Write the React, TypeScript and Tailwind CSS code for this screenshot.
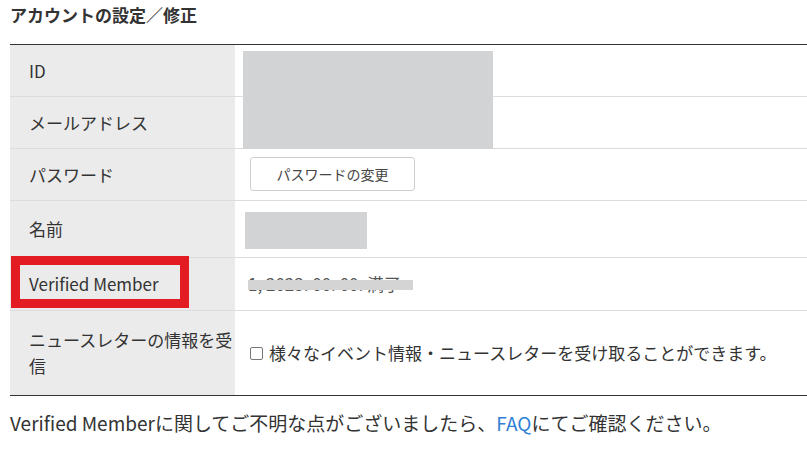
const rows = [
  { label: 'ID', h: 'h-[52px]' },
  { label: 'メールアドレス', h: 'h-[52px]' },
  { label: 'パスワード', h: 'h-[52px]' },
  { label: '名前', h: 'h-[57px]' },
  { label: 'Verified Member', h: 'h-[53px]' },
];

function Cell({ label, h, children }: { label: string; h: string; children?: React.ReactNode }) {
  return (
    <div className={`flex ${h} border-b border-[#dcdcdc]`}>
      <div className="w-[225px] shrink-0 bg-[#ebebeb] pl-[19px] flex items-center">{label}</div>
      <div className="flex-1 flex items-center">{children}</div>
    </div>
  );
}

export default function App() {
  return (
    <div className="w-[807px] h-[467px] bg-white text-[#333] font-['Noto_Sans_CJK_JP','Noto_Sans',sans-serif] overflow-hidden">
      <h1 className="pl-[10px] pt-[3px] text-[17px] leading-[24px] font-bold">アカウントの設定／修正</h1>

      <div className="relative ml-[10px] mt-[17px] border-t border-[#333] text-[17px]">
        <Cell {...rows[0]} />
        <Cell {...rows[1]} />
        <Cell {...rows[2]}>
          <button className="ml-[15px] mt-[-1px] w-[165px] h-[34px] border border-[#cfcfcf] rounded-[3px] bg-white text-[14px] text-[#444]">
            パスワードの変更
          </button>
        </Cell>
        <Cell {...rows[3]}>
          <div className="ml-[10px] mt-[3px] w-[122px] h-[37px] bg-[#d2d3d5]" />
        </Cell>
        <Cell {...rows[4]}>
          <div className="relative ml-[13px] text-[17px] text-[#555] leading-[24px] whitespace-nowrap">
            1, 2023. 00. 00. 満了
            <span className="absolute left-0 top-[8px] w-[165px] h-[10px] bg-[#d4d4d4]" />
          </div>
        </Cell>
        <div className="flex h-[85px] border-b border-[#333]">
          <div className="w-[225px] shrink-0 bg-[#ebebeb] pl-[19px] pr-0 flex items-center leading-[26px]">
            ニュースレターの情報を受信
          </div>
          <label className="flex-1 flex items-center gap-[6px] pl-[15px]">
            <span className="w-[13px] h-[13px] border border-[#777] rounded-[2px] bg-white" />
            <span>様々なイベント情報・ニュースレターを受け取ることができます。</span>
          </label>
        </div>

        {/* redacted block over ID / mail */}
        <div className="absolute left-[233px] top-[6px] w-[250px] h-[98px] bg-[#d2d3d5]" />
        {/* red highlight */}
        <div className="absolute left-[1px] top-[211px] w-[178px] h-[52px] border-[9px] border-[#e31b23]" />
      </div>

      <p className="pl-[10px] mt-[13px] text-[19px] leading-[28px]">
        Verified Memberに関してご不明な点がございましたら、<span className="text-[#2f7fd6]">FAQ</span>にてご確認ください。
      </p>
    </div>
  );
}
